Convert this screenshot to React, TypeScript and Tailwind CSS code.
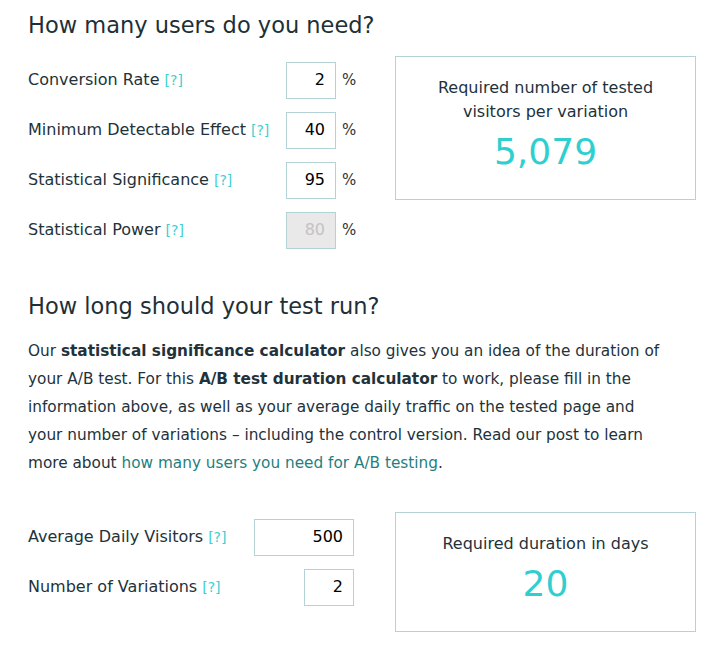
const font = { fontFamily: '"DejaVu Sans", "Noto Sans", sans-serif' };

function Help() {
  return <span className="ml-[5px] text-[14px] text-[#3ccfd2]">[?]</span>;
}

type RowProps = {
  label: string;
  value: string;
  wide?: boolean;
  disabled?: boolean;
  unit?: boolean;
};

function Row({ label, value, wide, disabled, unit }: RowProps) {
  return (
    <div className="flex h-[50px] items-center">
      <div className="flex-1 text-[16px] text-[#22323a]">
        {label}
        <Help />
      </div>
      <div
        className={
          'flex h-[37px] items-center justify-end border border-[#b4d3d7] pr-[10px] text-[16px] ' +
          (wide ? 'w-[100px] ' : 'w-[50px] ') +
          (disabled ? 'bg-[#e9e9e9] text-[#c3c3c3]' : 'bg-white text-black')
        }
      >
        {value}
      </div>
      {unit && <span className="ml-[6px] w-[15px] text-[15px] text-[#333]">%</span>}
    </div>
  );
}

function ResultBox({ title, value, tall }: { title: React.ReactNode; value: string; tall?: boolean }) {
  return (
    <div
      className={
        'flex w-[301px] shrink-0 flex-col items-center border border-[#b4d3d7] pt-[19px] text-center ' +
        (tall ? 'h-[144px]' : 'h-[120px]')
      }
    >
      <div className="text-[16px] leading-[24px] text-[#22323a]">{title}</div>
      <div className="mt-[6px] text-[36px] leading-[44px] text-[#30cfcf]">{value}</div>
    </div>
  );
}

export default function App() {
  return (
    <div className="min-h-screen bg-white pl-[28px] pr-[18px] pt-[8px]" style={font}>
      <h2 className="text-[22.5px] leading-[34px] text-[#1e2f36]">How many users do you need?</h2>

      <div className="mt-[13px] flex items-start gap-[38px]">
        <div className="w-[329px] shrink-0">
          <Row label="Conversion Rate" value="2" unit />
          <Row label="Minimum Detectable Effect" value="40" unit />
          <Row label="Statistical Significance" value="95" unit />
          <Row label="Statistical Power" value="80" unit disabled />
        </div>
        <div className="pt-[1px]">
          <ResultBox
            tall
            title={
              <>
                Required number of tested
                <br />
                visitors per variation
              </>
            }
            value="5,079"
          />
        </div>
      </div>

      <h2 className="mt-[34px] text-[22.5px] leading-[34px] text-[#1e2f36]">How long should your test run?</h2>
      <p className="mt-[14px] text-[15.3px] leading-[28px] text-[#22323a]">
        Our <b>statistical significance calculator</b> also gives you an idea of the duration of
        <br />
        your A/B test. For this <b>A/B test duration calculator</b> to work, please fill in the
        <br />
        information above, as well as your average daily traffic on the tested page and
        <br />
        your number of variations – including the control version. Read our post to learn
        <br />
        more about{' '}
        <a href="#" className="text-[#1f8080]">
          how many users you need for A/B testing
        </a>
        .
      </p>

      <div className="mt-[35px] flex items-start gap-[41px]">
        <div className="w-[326px] shrink-0">
          <Row label="Average Daily Visitors" value="500" wide />
          <Row label="Number of Variations" value="2" />
        </div>
        <ResultBox title="Required duration in days" value="20" />
      </div>
    </div>
  );
}
